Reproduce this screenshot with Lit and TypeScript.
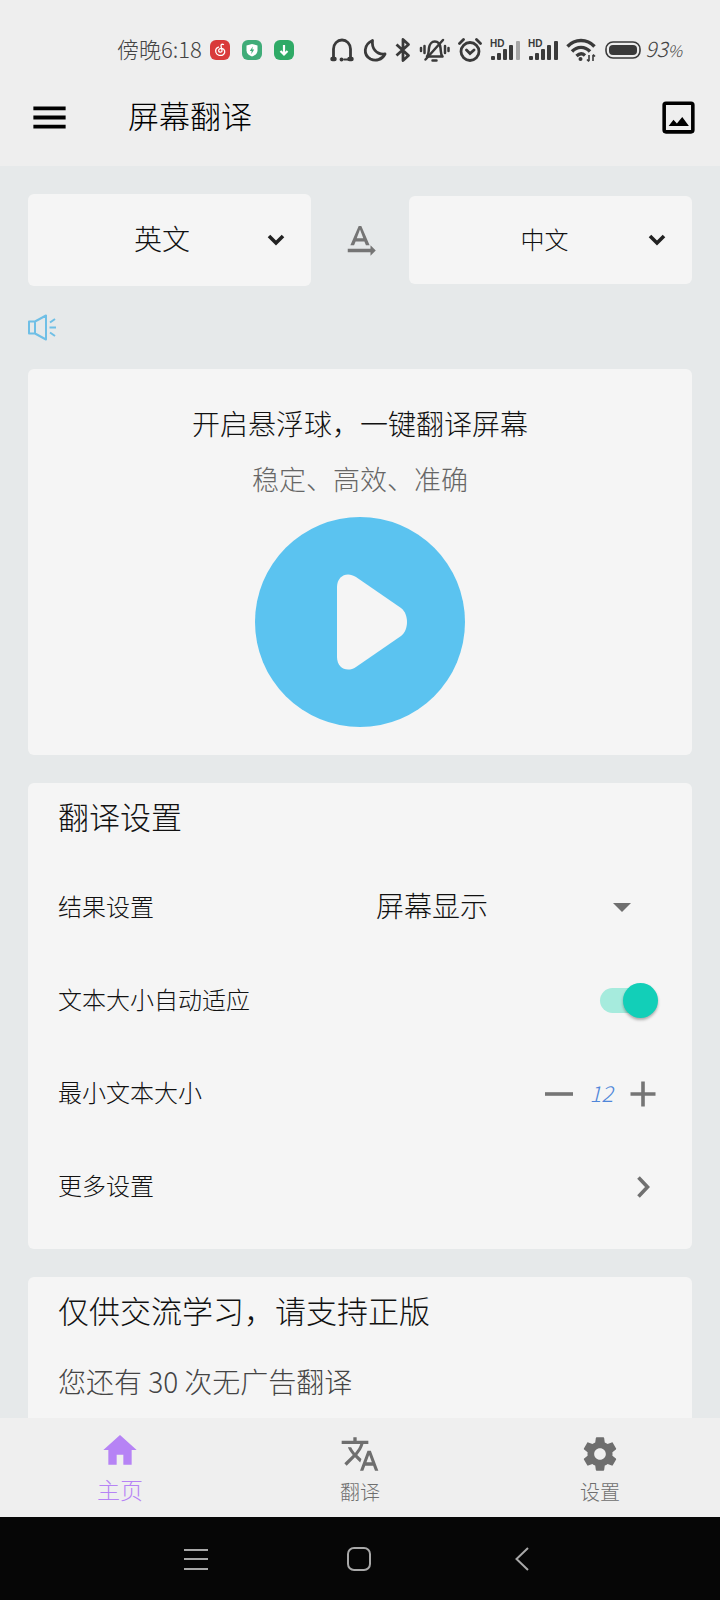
import { LitElement, html, css, svg } from "lit";
import { customElement, state } from "lit/decorators.js";

const signalBars = (last: number) => svg`
  <rect x="1" y="27" width="4" height="4" rx="1"/>
  <rect x="7" y="24" width="4" height="7" rx="1"/>
  <rect x="13" y="20" width="4" height="11" rx="1"/>
  <rect x="19" y="16" width="4" height="15" rx="1"/>
  <rect x="26" y="12" width="4" height="19" rx="1" opacity=${last}/>`;

@customElement("status-bar")
export class StatusBar extends LitElement {
  static styles = css`
    :host {
      box-sizing: border-box;
      display: flex;
      justify-content: space-between;
      height: 67px;
      padding: 33px 38px 0 117px;
      line-height: 34px;
      font-size: 22px;
      color: #444;
    }
    .group { display: flex; align-items: center; gap: 8px; height: 34px; }
    .time { padding-bottom: 4px; }
    .apps { display: flex; gap: 12px; }
    .power { display: flex; align-items: center; gap: 4px; }
    .level { font-size: 21px; font-style: italic; padding-bottom: 4px; }
    .percent { font-size: 16px; line-height: 16px; }
    svg { display: block; flex: none; }
    .hd { font: bold 10px "Liberation Sans", sans-serif; }
  `;

  render() {
    return html`
      <div class="group">
        <span class="time">傍晚6:18</span>
        <span class="apps">
          <svg width="20" height="20" viewBox="0 0 20 20">
            <rect width="20" height="20" rx="6" fill="#d93a3a"/>
            <path d="M13.500 4.500c-2-.8-2.700.4-2.400 1.800l.9 4c.4 2-2.800 2.700-3.300.7-.4-1.800 1.400-2.900 3.200-2.600 3 .5 3.800 4 1.600 6-2.600 2-6.500 1-7.500-1.800-.9-2.600.4-4.600 2.500-5.500" fill="none" stroke="#fff" stroke-width="1.300" stroke-linecap="round"/>
          </svg>
          <svg width="20" height="20" viewBox="0 0 20 20">
            <rect width="20" height="20" rx="6" fill="#3fac78"/>
            <path d="M10 4l5.500 1.500v5c0 3-2.500 5-5.500 6-3-1-5.500-3-5.500-6v-5z" fill="#fff"/>
            <path d="M10.800 6.500L7.800 11h1.900l-.5 3.200 3-4.600h-1.900z" fill="#3fac78"/>
          </svg>
          <svg width="20" height="20" viewBox="0 0 20 20">
            <rect width="20" height="20" rx="6" fill="#2faa66"/>
            <path d="M10 5v9M6.500 11l3.500 3.500 3.500-3.500" fill="none" stroke="#fff" stroke-width="2.200"/>
          </svg>
        </span>
      </div>
      <div class="group">
        <svg width="26" height="26" viewBox="0 0 26 26" fill="none" stroke="#3a3a3a" stroke-width="2.800" stroke-linecap="round">
          <path d="M4.500 22V12a8.500 9 0 0 1 17 0v10"/>
          <path d="M3.500 22h2M20.500 22h2" stroke-width="4.500"/>
          <circle cx="12.500" cy="22.500" r="1.200" fill="#3a3a3a" stroke-width="1.500"/>
          <path d="M15 22.500h4" stroke-width="1.800"/>
        </svg>
        <svg width="24" height="26" viewBox="0 0 24 26" fill="none" stroke="#3a3a3a" stroke-width="2.800" stroke-linejoin="round">
          <path d="M9.500 3.500C8.500 11 13 18 22 17 19 23 12.500 24.500 7.500 22 0 18 .5 7.500 9.500 3.500z"/>
        </svg>
        <svg width="16" height="26" viewBox="0 0 16 26" fill="none" stroke="#3a3a3a" stroke-width="2.800" stroke-linejoin="round">
          <path d="M1.500 7.500l12 11L8 23.500v-21l5.500 5-12 11"/>
        </svg>
        <svg width="31" height="26" viewBox="0 0 31 26" fill="none" stroke="#3a3a3a" stroke-width="2.500" stroke-linecap="round">
          <path d="M8 19.500c2-2 1.500-5 2-8.500.5-4 3-6.500 5.800-6.500S21 7 21.500 11c.5 3.500 0 6.500 2 8.500z" stroke-linejoin="round"/>
          <path d="M6.500 22.500L24 3M13.500 23.500h4M5.500 9v7M26 9v7M2 11v3M29.500 11v3"/>
        </svg>
        <svg width="24" height="26" viewBox="0 0 24 26" fill="none" stroke="#3a3a3a" stroke-width="2.800" stroke-linecap="round">
          <circle cx="12" cy="14.500" r="9"/>
          <path d="M1.500 6.500l4-4M22.500 6.500l-4-4M8.500 13l3.500 3.500 4-3.500"/>
        </svg>
        <svg width="30" height="32" viewBox="0 5 30 32" fill="#3a3a3a">
          <text class="hd" x="0" y="18">HD</text>${signalBars(0.4)}
        </svg>
        <svg width="30" height="32" viewBox="0 5 30 32" fill="#3a3a3a">
          <text class="hd" x="0" y="18">HD</text>${signalBars(1)}
        </svg>
        <svg width="31" height="26" viewBox="0 0 31 26" fill="none" stroke="#3a3a3a" stroke-width="3.400">
          <path d="M1.500 9.500c7.500-8 19.500-8 27 0M6 14.500c5-5.500 13-5.500 18 0M10.500 19c3-2.800 6-2.800 8.500-.5"/>
          <circle cx="14.500" cy="22" r="2" fill="#3a3a3a" stroke="none"/>
          <path d="M23 18v6M27 24v-6M21 22.500l2 2M29 19.500l-2-2" stroke-width="1.600"/>
        </svg>
        <span class="power">
          <svg width="36" height="18" viewBox="0 0 36 18">
            <rect x="1" y="1" width="34" height="16" rx="7" fill="none" stroke="#3a3a3a" stroke-width="1.600"/>
            <rect x="4" y="4" width="28" height="10" rx="4" fill="#3a3a3a"/>
          </svg>
          <span class="level">93<span class="percent">%</span></span>
        </span>
      </div>
    `;
  }
}

@customElement("app-root")
export class AppRoot extends LitElement {
  static styles = css`
    :host {
      display: flex;
      flex-direction: column;
      height: 100vh;
      background: #e6e9ea;
      color: #111;
      font-family: "Noto Sans CJK SC", sans-serif;
      font-weight: 300;
    }
    * { box-sizing: border-box; }
    svg { display: block; flex: none; }
    h1, h2, p { margin: 0; font-weight: inherit; }
    button, select {
      margin: 0;
      padding: 0;
      border: 0;
      background: none;
      color: inherit;
      font: inherit;
      appearance: none;
    }
    a { color: inherit; text-decoration: none; }

    .top { background: #eeeeee; }
    .appbar {
      display: flex;
      align-items: center;
      gap: 57px;
      height: 99px;
      padding: 2px 20px 0 28px;
      color: #000;
    }
    .title { flex: 1; font-size: 31px; line-height: 40px; padding-bottom: 6px; }

    .content {
      flex: 1;
      min-height: 0;
      overflow: hidden auto;
      scrollbar-width: none;
      display: flex;
      flex-direction: column;
      gap: 28px;
      padding: 28px 28px 0;
    }
    .content > * { flex: none; }
    .card { background: #f5f5f5; border-radius: 6px; }

    .languages {
      display: grid;
      grid-template-columns: 1fr 98px 1fr;
      align-items: center;
      justify-items: stretch;
    }
    .picker { display: grid; align-items: center; }
    .picker > * { grid-area: 1 / 1; }
    .picker svg { justify-self: end; pointer-events: none; }
    .language select { width: 100%; text-align-last: center; padding-bottom: 4px; }
    .language svg { margin-right: 26px; }
    .source select { height: 92px; font-size: 28px; padding-right: 15px; }
    .target select { height: 88px; font-size: 24px; padding-right: 12px; }
    .swap { justify-self: center; color: #757575; }
    .speak { width: 28px; height: 27px; }

    .launch {
      display: flex;
      flex-direction: column;
      align-items: center;
      gap: 16px;
      padding: 34px 28px 28px;
      line-height: 40px;
    }
    .lead { font-size: 28px; }
    .sub { font-size: 27px; padding-bottom: 2px; color: #666; }

    .panel { padding: 13px 34px 17px 30px; }
    .heading { font-size: 31px; line-height: 40px; }
    .rows { padding-top: 25px; }
    .panel:has(.rows) { padding-bottom: 16px; }
    .row {
      display: flex;
      align-items: center;
      justify-content: space-between;
      height: 93px;
      font-size: 24px;
    }
    .row label, .row span { padding-bottom: 5px; }
    .result { width: 282px; font-size: 28px; }
    .result select { width: 100%; line-height: 40px; padding-bottom: 5px; }
    .result svg { margin-right: 27px; }

    .switch {
      appearance: none;
      display: grid;
      align-items: center;
      width: 58px;
      height: 35px;
      margin: 0;
    }
    .switch::before, .switch::after { content: ""; grid-area: 1 / 1; }
    .switch::before {
      width: 52px;
      height: 25px;
      border-radius: 13px;
      background: #cfcfcf;
    }
    .switch::after {
      width: 35px;
      height: 35px;
      border-radius: 50%;
      background: #fafafa;
      box-shadow: 0 2px 3px rgba(0, 0, 0, 0.3);
    }
    .switch:checked::before { background: #a6ebdd; }
    .switch:checked::after { justify-self: end; background: #12cfb8; }

    .stepper { display: flex; align-items: center; gap: 15px; color: #757575; }
    .value { font-size: 22px; font-style: italic; padding-bottom: 4px; color: #4f86d9; }
    .remaining { padding: 31px 0 12px; font-size: 28px; line-height: 40px; color: #444; }

    .tabs {
      display: grid;
      grid-template-columns: repeat(3, 1fr);
      height: 99px;
      background: #efefef;
      color: #6e6e6e;
    }
    .tab {
      display: flex;
      flex-direction: column;
      align-items: center;
      gap: 6px;
      padding-top: 16px;
      font-size: 20px;
      line-height: 24px;
    }
    .tab.active {
      padding-top: 12px;
      gap: 4px;
      font-size: 23px;
      line-height: 30px;
      color: #b683f5;
    }
    .system {
      display: flex;
      align-items: center;
      justify-content: center;
      gap: 139px;
      height: 83px;
      padding-right: 2px;
      background: #060606;
      color: #a8a8a8;
    }
  `;

  @state() private autoSize = true;
  @state() private minSize = 12;

  private caret() {
    return html`<svg width="18" height="12" viewBox="0 0 18 12" fill="none" stroke="#222" stroke-width="3.600">
      <path d="M2 2l7 7 7-7"/>
    </svg>`;
  }

  render() {
    return html`
      <header class="top">
        <status-bar></status-bar>
        <div class="appbar">
          <button aria-label="菜单">
            <svg width="43" height="43" viewBox="0 0 24 24" fill="currentColor">
              <path d="M3 18.200h18v-2.200H3zM3 13.100h18v-2.200H3zM3 5.800v2.200h18v-2.200z"/>
            </svg>
          </button>
          <h1 class="title">屏幕翻译</h1>
          <button aria-label="图片">
            <svg width="43" height="43" viewBox="0 0 24 24">
              <rect x="4" y="4" width="16" height="16" rx="1" fill="none" stroke="#000" stroke-width="2"/>
              <path d="M6.500 16.800l2.700-3.600 1.900 2.200 3-3.700 3.700 5.100z" fill="#000"/>
            </svg>
          </button>
        </div>
      </header>

      <main class="content">
        <div class="languages">
          <div class="card picker language source">
            <select aria-label="源语言"><option>英文</option></select>
            ${this.caret()}
          </div>
          <button class="swap" aria-label="翻译方向">
            <svg width="42" height="42" viewBox="0 0 24 24" fill="currentColor">
              <path d="M21 18l-3-3v2H5v2h13v2l3-3zM9.500 12.800h5l.9 2.200h2.100L12.750 4h-1.500L6.500 15h2.100l.9-2.200zM12 5.980L13.870 11h-3.740L12 5.980z"/>
            </svg>
          </button>
          <div class="card picker language target">
            <select aria-label="目标语言"><option>中文</option></select>
            ${this.caret()}
          </div>
        </div>

        <button class="speak" aria-label="朗读">
          <svg width="28" height="27" viewBox="0 0 28 27" fill="none" stroke="#6fbfe6" stroke-width="2" stroke-linejoin="round">
            <path d="M1 7.500h6v12H1zM7 7.500l11-6v24L7 19.500M22 8.500L27 5M21.500 13.500H28M22 18.500l5 3.500"/>
          </svg>
        </button>

        <section class="card launch">
          <p class="lead">开启悬浮球，一键翻译屏幕</p>
          <p class="sub">稳定、高效、准确</p>
          <button aria-label="开启">
            <svg width="210" height="210" viewBox="0 0 210 210">
              <circle cx="105" cy="105" r="105" fill="#5bc3f0"/>
              <path d="M82 70C82 59 92 54 101 60L146 91C154 97 154 113 146 119L101 150C92 156 82 151 82 140Z" fill="#f5f5f5"/>
            </svg>
          </button>
        </section>

        <section class="card panel">
          <h2 class="heading">翻译设置</h2>
          <div class="rows">
            <div class="row">
              <label for="result">结果设置</label>
              <div class="picker result">
                <select id="result"><option>屏幕显示</option></select>
                <svg width="18" height="9" viewBox="0 0 18 9"><path d="M0 0h18L9 9z" fill="#6f6f6f"/></svg>
              </div>
            </div>
            <div class="row">
              <label for="auto">文本大小自动适应</label>
              <input id="auto" class="switch" type="checkbox" role="switch" .checked=${this.autoSize}
                @change=${(e: Event) => (this.autoSize = (e.target as HTMLInputElement).checked)}>
            </div>
            <div class="row">
              <span>最小文本大小</span>
              <div class="stepper">
                <button aria-label="减小" @click=${() => this.minSize--}>
                  <svg width="30" height="30" viewBox="0 0 30 30" stroke="currentColor" stroke-width="3.600"><path d="M1 15h28"/></svg>
                </button>
                <output class="value">${this.minSize}</output>
                <button aria-label="增大" @click=${() => this.minSize++}>
                  <svg width="30" height="30" viewBox="0 0 30 30" stroke="currentColor" stroke-width="3.600"><path d="M2.500 15h25M15 2.500v25"/></svg>
                </button>
              </div>
            </div>
            <a class="row" href="#more">
              <span>更多设置</span>
              <svg width="30" height="30" viewBox="0 0 30 30" fill="none" stroke="#707070" stroke-width="3.600"><path d="M10.500 5.500l9 9.500-9 9.500"/></svg>
            </a>
          </div>
        </section>

        <section class="card panel">
          <h2 class="heading">仅供交流学习，请支持正版</h2>
          <p class="remaining">您还有 30 次无广告翻译</p>
        </section>
      </main>

      <nav class="tabs">
        <a class="tab active" href="#home">
          <svg width="40" height="40" viewBox="0 0 24 24" fill="currentColor"><path d="M10 20.800v-6h4v6h5v-8.800h3L12 3 2 12h3v8.800z"/></svg>
          <span>主页</span>
        </a>
        <a class="tab" href="#translate">
          <svg width="40" height="40" viewBox="0 0 24 24" fill="currentColor">
            <path d="M12.870 15.070l-2.540-2.510.03-.03c1.740-1.940 2.980-4.170 3.710-6.530H17V4h-7V2H8v2H1v1.990h11.170C11.500 7.920 10.440 9.750 9 11.350 8.070 10.320 7.300 9.190 6.690 8h-2c.73 1.630 1.730 3.170 2.980 4.560l-5.090 5.020L4 19l5-5 3.110 3.110.76-2.040zM18.500 10h-2L12 22h2l1.120-3h4.750L21 22h2l-4.500-12zm-2.620 7l1.620-4.330L19.120 17h-3.240z"/>
          </svg>
          <span>翻译</span>
        </a>
        <a class="tab" href="#settings">
          <svg width="40" height="40" viewBox="0 0 24 24" fill="currentColor">
            <path d="M19.430 12.980c.04-.32.07-.64.07-.98s-.03-.66-.07-.98l2.110-1.650c.19-.15.24-.42.12-.64l-2-3.460c-.12-.22-.39-.3-.61-.22l-2.490 1c-.52-.4-1.080-.73-1.690-.98l-.38-2.650C14.460 2.180 14.250 2 14 2h-4c-.25 0-.46.18-.49.42l-.38 2.650c-.61.25-1.170.59-1.690.98l-2.490-1c-.23-.09-.49 0-.61.22l-2 3.460c-.13.22-.07.49.12.64l2.110 1.650c-.04.32-.07.65-.07.98s.03.66.07.98l-2.110 1.650c-.19.15-.24.42-.12.64l2 3.460c.12.22.39.3.61.22l2.490-1c.52.4 1.080.73 1.690.98l.38 2.650c.03.24.24.42.49.42h4c.25 0 .46-.18.49-.42l.38-2.650c.61-.25 1.170-.59 1.690-.98l2.490 1c.23.09.49 0 .61-.22l2-3.460c.12-.22.07-.49-.12-.64l-2.110-1.650zM12 15.500c-1.930 0-3.500-1.570-3.500-3.500s1.570-3.500 3.500-3.500 3.500 1.570 3.500 3.500-1.570 3.500-3.500 3.500z"/>
          </svg>
          <span>设置</span>
        </a>
      </nav>

      <footer class="system">
        <button aria-label="最近任务">
          <svg width="24" height="24" viewBox="0 0 24 24" stroke="currentColor" stroke-width="2"><path d="M0 3h24M0 12h24M0 22h24"/></svg>
        </button>
        <button aria-label="主屏幕">
          <svg width="24" height="24" viewBox="0 0 24 24" fill="none" stroke="currentColor" stroke-width="2"><rect x="1" y="1" width="22" height="22" rx="6"/></svg>
        </button>
        <button aria-label="返回">
          <svg width="24" height="24" viewBox="0 0 24 24" fill="none" stroke="currentColor" stroke-width="2"><path d="M18 1L6.500 12 18 23"/></svg>
        </button>
      </footer>
    `;
  }
}
